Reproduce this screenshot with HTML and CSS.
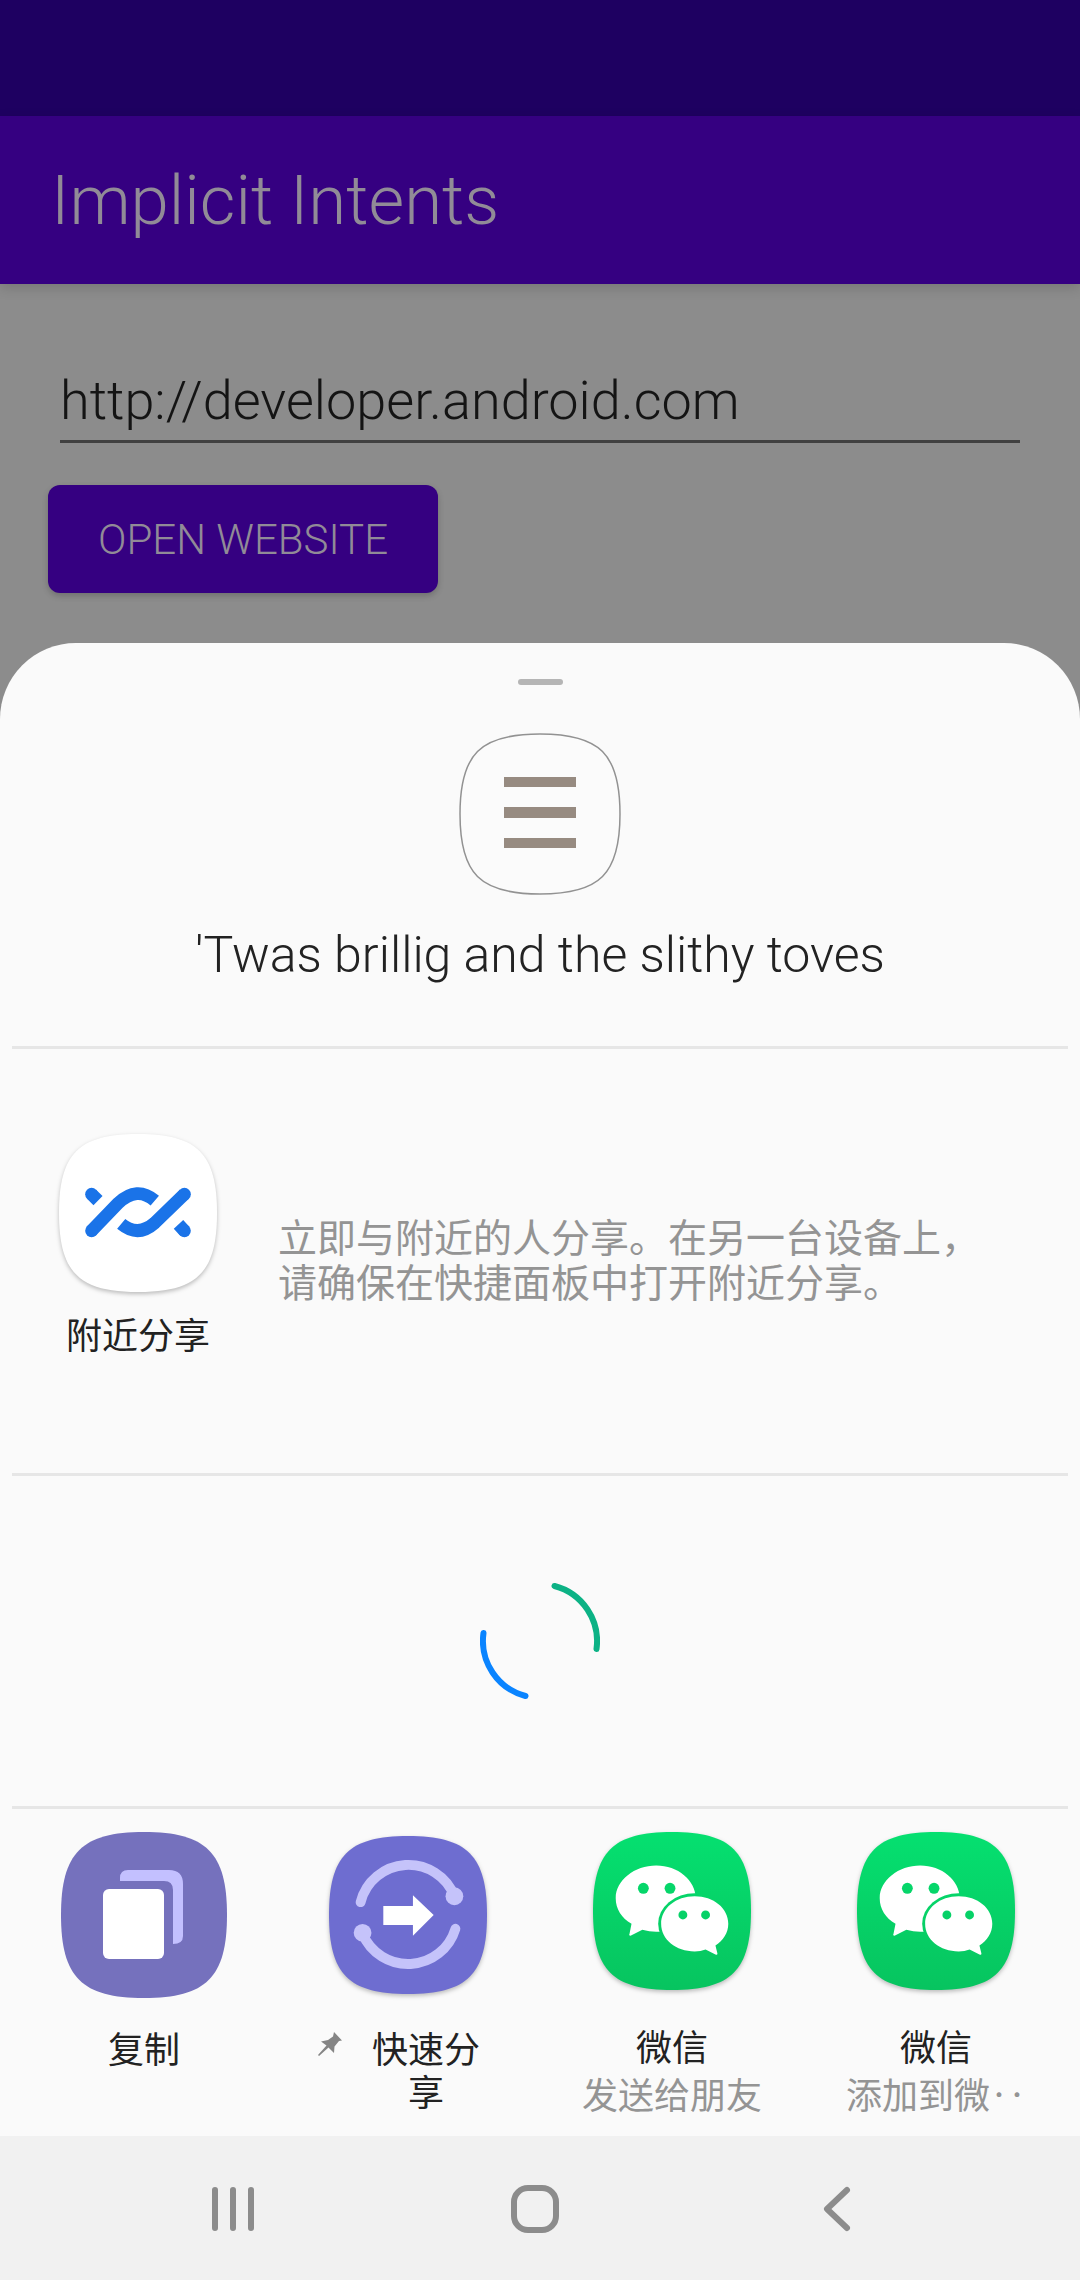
FILE: index.html
```html
<!DOCTYPE html>
<html lang="zh-CN">
<head>
<meta charset="utf-8">
<meta name="viewport" content="width=device-width, initial-scale=1">
<title>Implicit Intents</title>
<link rel="stylesheet" href="styles.css">
</head>
<body>
<svg class="defs" aria-hidden="true">
  <defs>
    <linearGradient id="green" gradientUnits="userSpaceOnUse" x1="0" y1="0" x2="0" y2="160">
      <stop offset="0" stop-color="#05e070"/>
      <stop offset="1" stop-color="#07c45f"/>
    </linearGradient>
    <symbol id="squircle" viewBox="0 0 160 160">
      <path d="M80 0C140 0 160 20 160 80S140 160 80 160S0 140 0 80S20 0 80 0Z"/>
    </symbol>
    <symbol id="wechat" viewBox="0 0 160 160">
      <path fill="url(#green)" d="M80 0C140 0 160 20 160 80S140 160 80 160S0 140 0 80S20 0 80 0Z"/>
      <path fill="#fff" d="M64 34C86 34 104 49 104 67S86 101 64 101Q57 101 50 99L38 105Q36 105 37 103L39 93C29 87 23 78 23 67C23 49 42 34 64 34Z"/>
      <circle cx="51" cy="57" r="5.5" fill="url(#green)"/>
      <circle cx="78" cy="57" r="5.5" fill="url(#green)"/>
      <ellipse cx="103" cy="93" rx="37" ry="31" fill="url(#green)"/>
      <path fill="#fff" d="M103 65C122 65 137 77 137 93C137 102 132 110 124 115L126 123Q126 125 124 124L114 119Q109 121 103 121C84 121 69 109 69 93S84 65 103 65Z"/>
      <circle cx="91" cy="84" r="4.5" fill="url(#green)"/>
      <circle cx="114" cy="84" r="4.5" fill="url(#green)"/>
    </symbol>
  </defs>
</svg>
<div class="screen">
  <div class="status"></div>
  <header class="appbar"><h1>Implicit Intents</h1></header>
  <main class="activity">
    <input class="field" type="text" aria-label="Website" value="http://developer.android.com">
    <button class="open" type="button">OPEN WEBSITE</button>
  </main>
  <section class="sheet">
    <div class="handle"></div>
    <div class="preview">
      <svg class="preview-icon" viewBox="0 0 162 162" aria-hidden="true">
        <path fill="#fbfbfb" stroke="#929292" stroke-width="1.5" d="M81 1C141 1 161 21 161 81S141 161 81 161S1 141 1 81S21 1 81 1Z"/>
        <path fill="#978b81" d="M45 44H117V54H45ZM45 74H117V85H45ZM45 105H117V115H45Z"/>
      </svg>
      <h2>'Twas brillig and the slithy toves</h2>
    </div>
    <div class="nearby">
      <button class="near" type="button">
        <svg class="icon lifted" viewBox="0 0 160 160" aria-hidden="true">
          <use href="#squircle" width="160" height="160" fill="#fff"/>
          <g fill="none" stroke="#1a73e8" stroke-width="13">
            <path d="M33 61L39.500 67.500M33 98L60 70Q79 52 97 67.500M63 91Q80 105 97 90L127 61M121 91.500L127 98"/>
          </g>
          <g fill="#1a73e8"><circle cx="33" cy="61" r="6.500"/><circle cx="33" cy="98" r="6.500"/><circle cx="127" cy="61" r="6.500"/><circle cx="127" cy="98" r="6.500"/></g>
        </svg>
        <span class="name">附近分享</span>
      </button>
      <p>立即与附近的人分享。在另一台设备上，请确保在快捷面板中打开附近分享。</p>
    </div>
    <div class="loading" role="status" aria-label="Loading">
      <svg class="spinner" viewBox="0 0 120 120" fill="none" stroke-width="6" stroke-linecap="round" aria-hidden="true">
        <path stroke="#0cb285" d="M74.500 5A57 57 0 0 1 116.500 68"/>
        <path stroke="#0a84ff" d="M45.500 115A57 57 0 0 1 3.500 52"/>
      </svg>
    </div>
    <div class="apps">
      <button class="app" type="button">
        <svg class="icon large" viewBox="0 0 166 166" aria-hidden="true">
          <use href="#squircle" width="166" height="166" fill="#7571bd"/>
          <path fill="#c3c0ff" d="M59 49V46Q59 38 67 38H108Q122 38 122 52V104Q122 112 112 112V58Q112 49 103 49Z"/>
          <rect x="42" y="57" width="61" height="70" rx="6" fill="#fff"/>
        </svg>
        <span class="name">复制</span>
      </button>
      <button class="app" type="button">
        <svg class="icon lifted low" viewBox="0 0 160 160" aria-hidden="true">
          <use href="#squircle" width="160" height="160" fill="#6e6dd0"/>
          <g fill="none" stroke="#c5c3fa" stroke-width="10" stroke-linecap="round">
            <path d="M32 67A50 50 0 0 1 127 61M34 99A50 50 0 0 0 128 94"/>
          </g>
          <circle cx="127" cy="61" r="9" fill="#c5c3fa"/><circle cx="34" cy="98" r="9" fill="#c5c3fa"/>
          <path fill="#fff" d="M55 71H85V60L106 80L85 101V90H55Z"/>
        </svg>
        <span class="pinned">
          <svg class="pin" viewBox="0 0 24 24" aria-hidden="true"><path fill="#858585" d="M16 0L24 8.500L21 9L16.500 14.500L16 21L10.500 15.500L1 24L0 23L8.500 13.500L3 9.500L10 8L15 4.500Z"/></svg>
          <span class="name">快速分享</span>
        </span>
      </button>
      <button class="app" type="button">
        <svg class="icon lifted" viewBox="0 0 160 160" aria-hidden="true"><use href="#wechat" width="160" height="160"/></svg>
        <span class="name">微信</span>
        <span class="sub">发送给朋友</span>
      </button>
      <button class="app" type="button">
        <svg class="icon lifted" viewBox="0 0 160 160" aria-hidden="true"><use href="#wechat" width="160" height="160"/></svg>
        <span class="name">微信</span>
        <span class="sub">添加到微‥</span>
      </button>
    </div>
  </section>
  <nav class="navbar">
    <button type="button" aria-label="Recents"><svg viewBox="0 0 48 48"><path d="M6 5V43M24 5V43M42 5V43"/></svg></button>
    <button type="button" aria-label="Home"><svg viewBox="0 0 48 48"><rect x="3" y="3" width="42" height="42" rx="14"/></svg></button>
    <button type="button" aria-label="Back"><svg viewBox="0 0 48 48"><path d="M34 5L14 24L34 43"/></svg></button>
  </nav>
</div>
</body>
</html>
```
FILE: styles.css
```css
* { box-sizing: border-box; }

body {
  margin: 0;
  background: #8c8c8c;
  font-family: Roboto, "Noto Sans CJK SC", sans-serif;
  font-weight: 300;
}

button {
  padding: 0;
  border: 0;
  background: none;
  color: inherit;
  font: inherit;
}

h1, h2, p { margin: 0; font-weight: inherit; }

svg { display: block; }

.defs { position: absolute; width: 0; height: 0; }

.screen {
  display: flex;
  flex-direction: column;
  min-height: 100vh;
}

.status { height: 116px; background: #1e0061; }

.appbar {
  display: flex;
  align-items: center;
  height: 168px;
  padding: 2px 51px 0;
  background: #350081;
  box-shadow: 0 4px 12px rgba(0, 0, 0, 0.15);
  color: #918b97;
}

.appbar h1 { font-size: 69px; line-height: 80px; }

.activity {
  display: flex;
  flex-direction: column;
  align-items: flex-start;
  gap: 42px;
  padding: 76px 48px 50px;
}

.field {
  align-self: stretch;
  height: 83px;
  margin: 0 12px;
  padding: 0;
  border: 0;
  border-bottom: 3px solid #414141;
  border-radius: 0;
  background: none;
  color: #141414;
  font: inherit;
  font-size: 54px;
  outline: none;
}

.open {
  height: 108px;
  padding: 0 50px;
  border-radius: 12px;
  background: #350081;
  box-shadow: 0 3px 6px rgba(0, 0, 0, 0.2);
  color: #918b97;
  font-size: 42px;
}

.sheet {
  flex: 1;
  display: flex;
  flex-direction: column;
  padding: 36px 12px 0;
  border-radius: 76px 76px 0 0;
  background: #fafafa;
  color: #222;
}

.handle {
  align-self: center;
  width: 45px;
  height: 6px;
  border-radius: 3px;
  background: #b5b5b5;
}

.preview {
  display: flex;
  flex-direction: column;
  align-items: center;
  gap: 30px;
  padding: 48px 0 61px;
  border-bottom: 3px solid #e6e6e6;
}

.preview-icon { width: 162px; height: 162px; }

.preview h2 { font-size: 50px; line-height: 60px; }

.nearby {
  display: flex;
  align-items: center;
  gap: 14px;
  height: 427px;
  padding-right: 60px;
  border-bottom: 3px solid #e6e6e6;
}

.near {
  display: flex;
  flex-direction: column;
  align-items: center;
  align-self: flex-start;
  gap: 20px;
  width: 252px;
  padding-top: 85px;
}

.nearby p {
  flex: 1;
  padding-top: 2px;
  color: #949494;
  font-size: 39px;
  font-weight: 400;
  line-height: 45px;
}

.icon { width: 158px; height: 158px; overflow: visible; }
.large { width: 166px; height: 166px; }
.lifted { filter: drop-shadow(0 2px 2px rgba(0, 0, 0, 0.25)); }

.loading {
  display: grid;
  place-items: center;
  height: 333px;
  border-bottom: 3px solid #e6e6e6;
}

.spinner { width: 120px; height: 120px; }

.apps {
  display: grid;
  grid-template-columns: repeat(4, 1fr);
  padding-top: 23px;
}

.app {
  display: flex;
  flex-direction: column;
  align-items: center;
}

.low { margin-top: 4px; }

.app .name { margin-top: 34px; }
.app .large + .name { margin-top: 28px; }

.name, .sub {
  font-family: "Noto Sans CJK SC", sans-serif;
  font-size: 36px;
  font-weight: 400;
  line-height: 43px;
}

.sub { margin-top: 5px; color: #949494; white-space: nowrap; }

.pinned {
  display: flex;
  gap: 24px;
  padding-right: 12px;
  margin-top: 32px;
}

.pinned .name { width: 120px; margin: 0; }

.pin { width: 24px; height: 24px; margin-top: 6px; }

.navbar {
  display: grid;
  grid-template-columns: repeat(3, 1fr);
  height: 144px;
  padding: 2px 92px 0 82px;
  background: #f1f1f1;
}

.navbar button { display: grid; place-items: center; }

.navbar svg {
  width: 48px;
  height: 48px;
  fill: none;
  stroke: #8c8c8c;
  stroke-width: 6;
  stroke-linecap: round;
  stroke-linejoin: round;
}
```
